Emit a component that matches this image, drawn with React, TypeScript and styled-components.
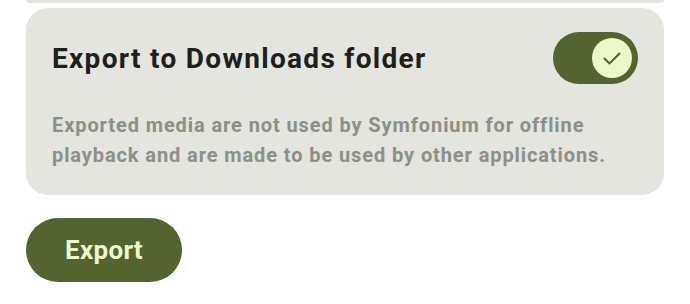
import React, { useState } from 'react';
import styled, { createGlobalStyle } from 'styled-components';

const colors = {
  page: '#ffffff',
  card: '#e3e5de',
  title: '#1d211a',
  muted: '#8d9087',
  primary: '#53642f',
  onPrimary: '#ecf8c9',
};

const GlobalStyle = createGlobalStyle`
  html, body {
    margin: 0;
    padding: 0;
    background: ${colors.page};
    font-family: Roboto, "Noto Sans", sans-serif;
  }
`;

const Page = styled.div`
  width: 690px;
  height: 304px;
  overflow: hidden;
  box-sizing: border-box;
  padding: 0 26px;
  display: flex;
  flex-direction: column;
`;

const PrevCard = styled.div`
  height: 3px;
  background: ${colors.card};
  border-radius: 0 0 4px 4px;
`;

const Card = styled.section`
  margin-top: 5px;
  background: ${colors.card};
  border-radius: 22px;
  padding: 24px 26px 25px;
  display: flex;
  flex-direction: column;
`;

const Header = styled.div`
  display: flex;
  align-items: center;
  justify-content: space-between;
  height: 52px;
`;

const Title = styled.h2`
  margin: 0;
  font-size: 28px;
  font-weight: 700;
  color: ${colors.title};
  letter-spacing: 1.3px;
`;

const Description = styled.p`
  margin: 26px 0 0;
  font-size: 20px;
  line-height: 30px;
  font-weight: 700;
  letter-spacing: 0.9px;
  color: ${colors.muted};
`;

const Track = styled.button<{ $on: boolean }>`
  width: 85px;
  height: 52px;
  border-radius: 26px;
  border: none;
  padding: 0 6px;
  box-sizing: border-box;
  background: ${({ $on }) => ($on ? colors.primary : '#c5c8bd')};
  display: flex;
  align-items: center;
  justify-content: ${({ $on }) => ($on ? 'flex-end' : 'flex-start')};
  cursor: pointer;
`;

const Thumb = styled.span`
  width: 40px;
  height: 40px;
  border-radius: 50%;
  background: ${colors.onPrimary};
  display: flex;
  align-items: center;
  justify-content: center;
`;

const ExportButton = styled.button`
  margin-top: 23px;
  align-self: flex-start;
  width: 156px;
  height: 64px;
  border: none;
  border-radius: 32px;
  background: ${colors.primary};
  color: ${colors.onPrimary};
  font-family: Roboto, "Noto Sans", sans-serif;
  font-size: 26px;
  font-weight: 700;
  letter-spacing: 0.3px;
  cursor: pointer;
`;

const Check = () => (
  <svg width="24" height="24" viewBox="0 0 24 24" fill="none">
    <path d="M4.5 12.5l5 5 10-10" stroke={colors.primary} strokeWidth="2" strokeLinecap="round" strokeLinejoin="round" />
  </svg>
);

export default function App() {
  const [on, setOn] = useState(true);
  return (
    <>
      <GlobalStyle />
      <Page>
        <PrevCard />
        <Card>
          <Header>
            <Title>Export to Downloads folder</Title>
            <Track $on={on} onClick={() => setOn(!on)} aria-pressed={on}>
              <Thumb>{on && <Check />}</Thumb>
            </Track>
          </Header>
          <Description>
            Exported media are not used by Symfonium for offline playback and are made to be used by other applications.
          </Description>
        </Card>
        <ExportButton>Export</ExportButton>
      </Page>
    </>
  );
}
